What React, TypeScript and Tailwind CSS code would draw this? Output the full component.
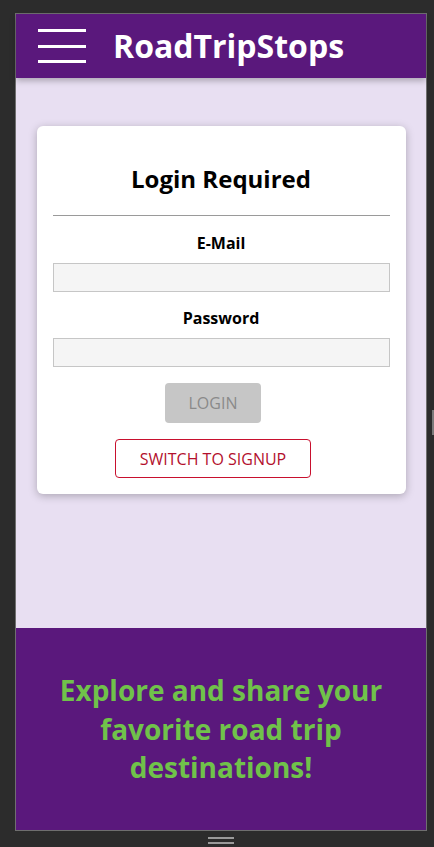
import React from "react";

const Header = () => {
  return (
    <header className="relative z-10 h-[64px] shrink-0 bg-[#5a187c] flex flex-row items-center pl-[22px] shadow-[0_3px_6px_rgba(0,0,0,0.25)]">
      <button type="button" className="w-[48px] h-[34px] flex flex-col justify-between">
        <span className="block w-full h-[3px] bg-white" />
        <span className="block w-full h-[3px] bg-white" />
        <span className="block w-full h-[3px] bg-white" />
      </button>
      <h1 className="ml-[27px] text-[32px] leading-[44px] font-bold text-white">
        RoadTripStops
      </h1>
    </header>
  );
};

const Field = ({ label, type }: { label: string; type: string }) => {
  return (
    <div className="w-full flex flex-col items-center">
      <label className="text-[16px] leading-[24px] font-bold text-black mb-[8px]">
        {label}
      </label>
      <input
        type={type}
        className="w-full h-[29px] bg-[#f5f5f5] border border-[#c6c6c6] outline-none"
      />
    </div>
  );
};

const LoginCard = () => {
  return (
    <div className="w-[90%] mx-auto mt-[48px] bg-white rounded-[6px] p-[16px] shadow-[0_2px_8px_rgba(0,0,0,0.26)]">
      <h2 className="mt-[19px] text-center text-[24px] leading-[36px] font-bold text-black">
        Login Required
      </h2>
      <hr className="mt-[18px] border-0 border-t border-[#9a9a9a]" />
      <form className="flex flex-col items-center">
        <div className="w-full mt-[15px]">
          <Field label="E-Mail" type="email" />
        </div>
        <div className="w-full mt-[14px]">
          <Field label="Password" type="password" />
        </div>
        <button
          type="submit"
          disabled
          className="mt-[16px] mr-[16px] h-[40px] px-6 rounded-[4px] bg-[#c6c6c6] text-[16px] text-[#8a8a8a]"
        >
          LOGIN
        </button>
        <button
          type="button"
          className="mt-[16px] mr-[16px] h-[39px] px-6 rounded-[4px] bg-white border border-[#c8102e] text-[16px] text-[#b3102d]"
        >
          SWITCH TO SIGNUP
        </button>
      </form>
    </div>
  );
};

const Footer = () => {
  return (
    <footer className="h-[202px] shrink-0 bg-[#5a187c] flex items-center justify-center px-8">
      <h2 className="text-center text-[28px] leading-[38.5px] font-bold text-[#70c24a]">
        Explore and share your favorite road trip destinations!
      </h2>
    </footer>
  );
};

export default function App() {
  return (
    <div
      className="relative w-[434px] h-[847px] overflow-hidden bg-[#2c2c2c] pt-[13px] pl-[15px]"
      style={{ fontFamily: '"Open Sans", "Noto Sans", sans-serif' }}
    >
      <div className="w-[412px] h-[818px] border border-[#6f6f6f] flex flex-col">
        <Header />
        <main className="flex-1 bg-[#e8dff2]">
          <LoginCard />
        </main>
        <Footer />
      </div>
      <div className="w-[412px] mt-[6px] flex flex-col items-center gap-[3px]">
        <span className="block w-[26px] h-[2px] bg-[#9a9a9a]" />
        <span className="block w-[26px] h-[2px] bg-[#9a9a9a]" />
      </div>
      <span className="absolute left-[432px] top-[410px] w-[2px] h-[25px] bg-[#7a7a7a]" />
    </div>
  );
}
